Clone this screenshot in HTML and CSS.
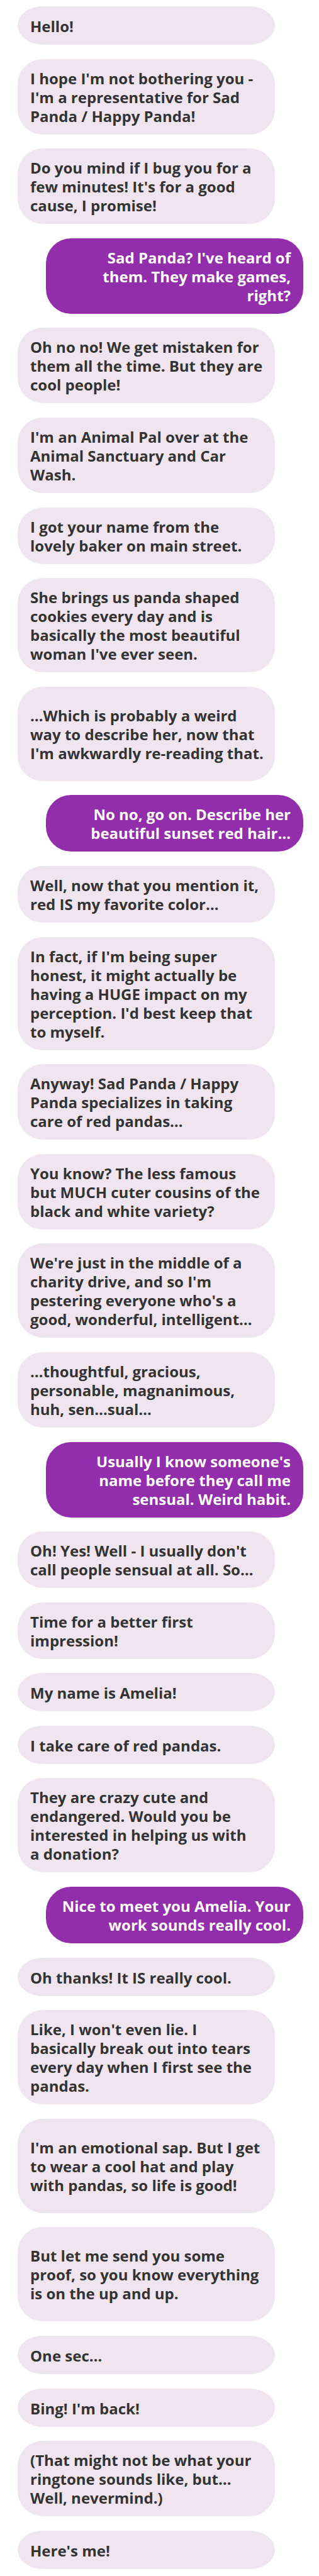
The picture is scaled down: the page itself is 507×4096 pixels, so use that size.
FILE: index.html
```html
<!DOCTYPE html>
<html lang="en">
<head>
<meta charset="utf-8">
<meta name="viewport" content="width=device-width, initial-scale=1">
<title>Amelia</title>
<link rel="stylesheet" href="styles.css">
</head>
<body>
<main class="chat">
<p class="bubble short">Hello!</p>
<p class="bubble">I hope I'm not bothering you -<br>I'm a representative for Sad<br>Panda / Happy Panda!</p>
<p class="bubble">Do you mind if I bug you for a<br>few minutes! It's for a good<br>cause, I promise!</p>
<p class="bubble reply">Sad Panda? I've heard of<br>them. They make games,<br>right?</p>
<p class="bubble">Oh no no! We get mistaken for<br>them all the time. But they are<br>cool people!</p>
<p class="bubble">I'm an Animal Pal over at the<br>Animal Sanctuary and Car<br>Wash.</p>
<p class="bubble">I got your name from the<br>lovely baker on main street.</p>
<p class="bubble">She brings us panda shaped<br>cookies every day and is<br>basically the most beautiful<br>woman I've ever seen.</p>
<p class="bubble roomy">…Which is probably a weird<br>way to describe her, now that<br>I'm awkwardly re-reading that.</p>
<p class="bubble reply">No no, go on. Describe her<br>beautiful sunset red hair…</p>
<p class="bubble">Well, now that you mention it,<br>red IS my favorite color…</p>
<p class="bubble">In fact, if I'm being super<br>honest, it might actually be<br>having a HUGE impact on my<br>perception. I'd best keep that<br>to myself.</p>
<p class="bubble">Anyway! Sad Panda / Happy<br>Panda specializes in taking<br>care of red pandas…</p>
<p class="bubble">You know? The less famous<br>but MUCH cuter cousins of the<br>black and white variety?</p>
<p class="bubble">We're just in the middle of a<br>charity drive, and so I'm<br>pestering everyone who's a<br>good, wonderful, intelligent…</p>
<p class="bubble">…thoughtful, gracious,<br>personable, magnanimous,<br>huh, sen…sual…</p>
<p class="bubble reply">Usually I know someone's<br>name before they call me<br>sensual. Weird habit.</p>
<p class="bubble">Oh! Yes! Well - I usually don't<br>call people sensual at all. So…</p>
<p class="bubble">Time for a better first<br>impression!</p>
<p class="bubble short">My name is Amelia!</p>
<p class="bubble short">I take care of red pandas.</p>
<p class="bubble">They are crazy cute and<br>endangered. Would you be<br>interested in helping us with<br>a donation?</p>
<p class="bubble reply">Nice to meet you Amelia. Your<br>work sounds really cool.</p>
<p class="bubble short">Oh thanks! It IS really cool.</p>
<p class="bubble">Like, I won't even lie. I<br>basically break out into tears<br>every day when I first see the<br>pandas.</p>
<p class="bubble roomy">I'm an emotional sap. But I get<br>to wear a cool hat and play<br>with pandas, so life is good!</p>
<p class="bubble roomy">But let me send you some<br>proof, so you know everything<br>is on the up and up.</p>
<p class="bubble short">One sec…</p>
<p class="bubble short">Bing! I'm back!</p>
<p class="bubble">(That might not be what your<br>ringtone sounds like, but…<br>Well, nevermind.)</p>
<p class="bubble short">Here's me!</p>
</main>
</body>
</html>
```
FILE: styles.css
```css
* {
  box-sizing: border-box;
}

body {
  margin: 0;
  background: #fff;
  color: #333;
  font-family: "Open Sans", sans-serif;
  font-size: 24px;
  font-weight: 700;
  line-height: 30px;
}

.chat {
  display: flex;
  flex-direction: column;
  justify-content: space-between;
  gap: 22px;
  min-height: 100vh;
  padding: 10px 25px 11px 28px;
}

.bubble {
  width: 90%;
  margin: 0;
  padding: 16px 8px 14px 20px;
  border-radius: 40px;
  background: #f0e4ef;
}

.short {
  padding-top: 17px;
  border-radius: 40px / 50%;
}

.roomy {
  padding-top: 31px;
  padding-bottom: 29px;
}

.reply {
  align-self: flex-end;
  padding-right: 20px;
  background: #922dab;
  color: #fff;
  text-align: right;
}
```
